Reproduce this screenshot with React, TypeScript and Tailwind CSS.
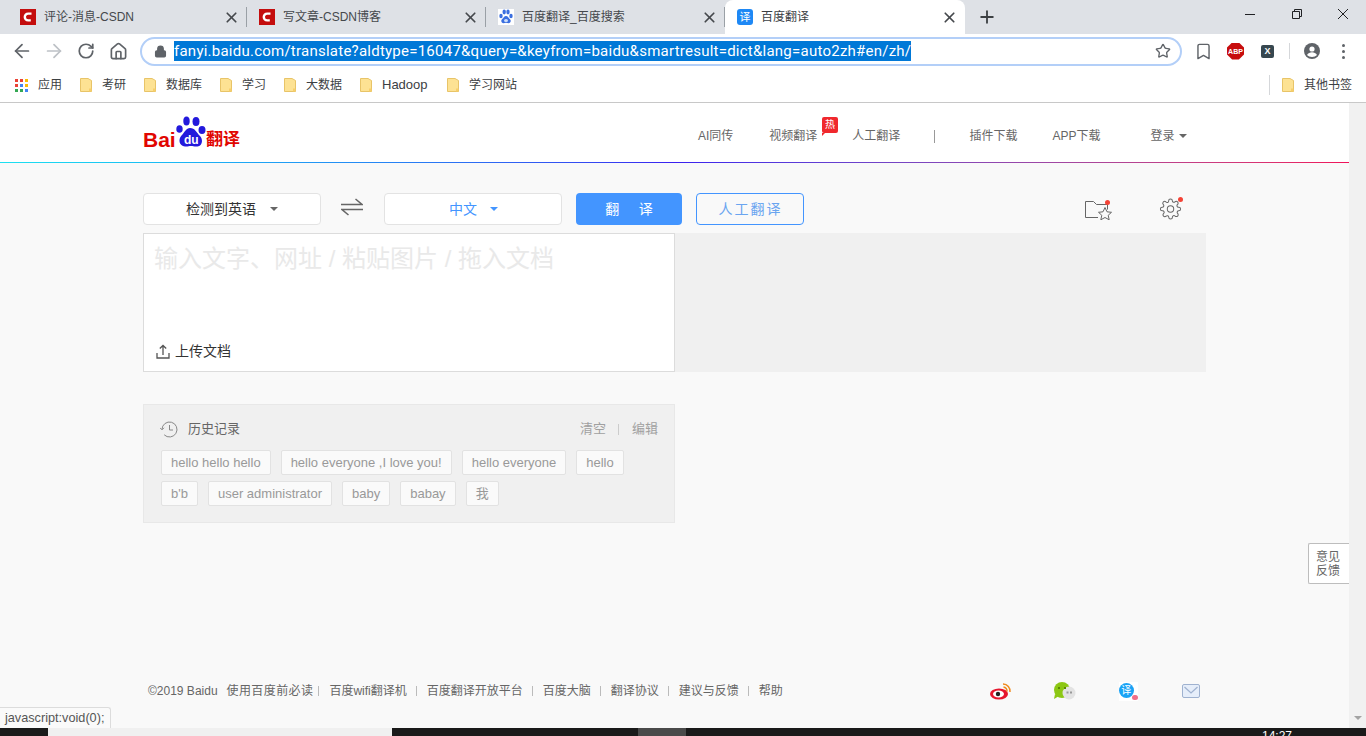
import { ArrowLeft, ArrowRight, RotateCw, House, Lock, Star, Bookmark, Plus, X } from "lucide-react";

const tabs = [
  { title: "评论-消息-CSDN", icon: "csdn" },
  { title: "写文章-CSDN博客", icon: "csdn" },
  { title: "百度翻译_百度搜索", icon: "paw" },
];

const bookmarks = [
  { name: "考研", cls: "w-[64px]", text: "text-[12px]" },
  { name: "数据库", cls: "w-[76px]", text: "text-[12px]" },
  { name: "学习", cls: "w-[64px]", text: "text-[12px]" },
  { name: "大数据", cls: "w-[76px]", text: "text-[12px]" },
  { name: "Hadoop", cls: "w-[87px]", text: "text-[13px]" },
  { name: "学习网站", cls: "w-[90px]", text: "text-[12px]" },
];

const row1 = ["hello hello hello", "hello everyone ,I love you!", "hello everyone", "hello"];
const row2 = ["b'b", "user administrator", "baby", "babay", "我"];

const footerLinks = ["百度wifi翻译机", "百度翻译开放平台", "百度大脑", "翻译协议", "建议与反馈", "帮助"];

function CsdnIcon() {
  return (
    <div className="w-4 h-4 bg-[#c40d0d] flex items-center justify-center shrink-0">
      <svg width="12" height="12" viewBox="0 0 12 12">
        <path d="M9.5 2.6H6.2C4.2 2.6 2.8 4.2 2.8 6s1.4 3.4 3.4 3.4h2.6" fill="none" stroke="#fff" strokeWidth="2.4" />
      </svg>
    </div>
  );
}

function Paw({ size, color }: { size: number; color: string }) {
  return (
    <svg width={size} height={size} viewBox="0 0 16 16" className="shrink-0 bg-white">
      <ellipse cx="3" cy="7" rx="1.700" ry="2.200" fill={color} />
      <ellipse cx="6.200" cy="3" rx="1.700" ry="2.400" fill={color} />
      <ellipse cx="10" cy="3" rx="1.700" ry="2.400" fill={color} />
      <ellipse cx="13" cy="7" rx="1.700" ry="2.200" fill={color} />
      <path d="M8 7c-2 0-2.500 2-4 3.200-1.500 1.500-.5 4 1.500 4 1 0 1.500-.4 2.500-.4s1.500.4 2.500.4c2 0 3-2.500 1.500-4C10.500 9 10 7 8 7z" fill={color} />
      <ellipse cx="8" cy="11.500" rx="2" ry="1.600" fill="#cfe0fa" />
    </svg>
  );
}

function Folder() {
  return (
    <svg width="12" height="14" viewBox="0 0 12 14" className="shrink-0">
      <path d="M.5.5h7.500l3.500 2v11H.5z" fill="#fde293" stroke="#e8c468" />
      <path d="M9 10.500h2.500v3H9z" fill="#f7cf6b" />
    </svg>
  );
}

function Tab({ title, icon }: { title: string; icon: string }) {
  return (
    <div className="w-[239px] h-[34px] flex items-center pl-3 pr-[6px] border-r border-[#9aa0a6] [border-image:linear-gradient(transparent_8px,#9aa0a6_8px,#9aa0a6_26px,transparent_26px)_1]">
      {icon === "csdn" ? <CsdnIcon /> : <Paw size={16} color="#3b6fe0" />}
      <span className="ml-2 text-[12px] text-[#45484c] flex-1">{title}</span>
      <X size={17} strokeWidth={2.400} className="text-[#45484c]" />
    </div>
  );
}

function NavBtn({ children }: { children: React.ReactNode }) {
  return <div className="w-[32px] h-[32px] flex items-center justify-center shrink-0">{children}</div>;
}

function Chrome() {
  return (
    <div className="shrink-0">
      <div className="h-[34px] bg-[#dee1e6] flex items-start pl-[8px] relative">
        {tabs.map((t) => (
          <Tab key={t.title} title={t.title} icon={t.icon} />
        ))}
        <div className="w-[240px] h-[34px] bg-white rounded-t-[8px] flex items-center pl-3 pr-[7px]">
          <div className="w-4 h-4 rounded-[3px] bg-[#1e88f5] text-white text-[11px] leading-4 text-center shrink-0">译</div>
          <span className="ml-2 text-[12px] text-[#3c4043] flex-1">百度翻译</span>
          <X size={17} strokeWidth={2.400} className="text-[#45484c]" />
        </div>
        <Plus size={20} strokeWidth={2.200} className="text-[#3c4043] ml-[12px] mt-[7px]" />
        <div className="ml-auto flex items-start pt-[13px] pr-[17px] gap-[34px] text-[#202124]">
          <div className="w-[10px] h-px bg-[#202124] mt-[1px] mr-[2px]" />
          <svg width="12" height="12" viewBox="0 0 12 12" className="-mt-[5px] ml-0">
            <path d="M1.500 3.500h7v7h-7zM3.500 3.500v-2h7v7h-2" fill="none" stroke="#202124" />
          </svg>
          <svg width="12" height="12" viewBox="0 0 12 12" className="-mt-[5px]">
            <path d="M1 1l10 10M11 1L1 11" stroke="#202124" strokeWidth="1" />
          </svg>
        </div>
      </div>
      <div className="h-[34px] bg-white flex items-center pl-[6px]">
        <NavBtn>
          <ArrowLeft size={22} strokeWidth={1.900} className="text-[#5f6368]" />
        </NavBtn>
        <NavBtn>
          <ArrowRight size={22} strokeWidth={1.900} className="text-[#bdc1c6]" />
        </NavBtn>
        <NavBtn>
          <RotateCw size={18} strokeWidth={2.300} className="text-[#5f6368]" />
        </NavBtn>
        <NavBtn>
          <House size={19} strokeWidth={2.100} className="text-[#5f6368]" />
        </NavBtn>
        <div className="ml-[6px] w-[1042px] h-[29px] rounded-full border-2 border-[#b3cff8] flex items-center pl-[12px] pr-[9px] shrink-0">
          <Lock size={13} strokeWidth={2.500} fill="#5f6368" className="text-[#5f6368] shrink-0" />
          <span className="ml-[7px] bg-[#0078d7] text-white text-[15px] tracking-[0.24px] leading-[20px] font-['Roboto',sans-serif] whitespace-nowrap">
            fanyi.baidu.com/translate?aldtype=16047&query=&keyfrom=baidu&smartresult=dict&lang=auto2zh#en/zh/
          </span>
          <Star size={16} className="ml-auto text-[#5f6368]" />
        </div>
        <Bookmark size={19} strokeWidth={1.800} className="text-[#5f6368] ml-[12px] shrink-0" />
        <div className="ml-[14px] w-[17px] h-[17px] shrink-0 bg-[#c70d0d] [clip-path:polygon(30%_0,70%_0,100%_30%,100%_70%,70%_100%,30%_100%,0_70%,0_30%)] text-white text-[7px] font-bold text-center leading-[17px] font-['Liberation_Sans',sans-serif]">
          ABP
        </div>
        <div className="ml-[17px] w-[13px] h-[13px] shrink-0 rounded-[2px] bg-[#37474f] text-white text-[9px] font-bold text-center leading-[13px] font-['Liberation_Sans',sans-serif]">
          X
        </div>
        <div className="ml-[15px] w-px h-[16px] bg-[#d5d7da] shrink-0" />
        <svg width="18" height="18" viewBox="0 0 18 18" className="ml-[13px] shrink-0">
          <circle cx="9" cy="9" r="8" fill="#5f6368" />
          <circle cx="9" cy="7" r="2.600" fill="#fff" />
          <path d="M4 13c1-2 3-2.800 5-2.800s4 .8 5 2.800c-1.200 1.300-3 2-5 2s-3.800-.7-5-2z" fill="#fff" />
        </svg>
        <div className="ml-[21px] flex flex-col gap-[3px] shrink-0">
          <div className="w-[3px] h-[3px] rounded-full bg-[#5f6368]" />
          <div className="w-[3px] h-[3px] rounded-full bg-[#5f6368]" />
          <div className="w-[3px] h-[3px] rounded-full bg-[#5f6368]" />
        </div>
      </div>
      <div className="h-[35px] bg-white border-b border-[#c8c8c8] flex items-center text-[12px] text-[#3c4043]">
        <div className="ml-[15px] w-[13px] grid grid-cols-3 gap-[2px]">
          {["#ea4335", "#ea4335", "#fbbc05", "#ea4335", "#4285f4", "#fbbc05", "#34a853", "#34a853", "#4285f4"].map((c, i) => (
            <div key={i} className="w-[3px] h-[3px]" style={{ background: c }} />
          ))}
        </div>
        <span className="ml-[10px] w-[42px]">应用</span>
        {bookmarks.map((b) => (
          <div key={b.name} className={`${b.cls} flex items-center gap-[10px] shrink-0`}>
            <Folder />
            <span className={b.text}>{b.name}</span>
          </div>
        ))}
        <div className="ml-auto w-px h-[20px] bg-[#d5d7da]" />
        <div className="ml-[12px] mr-[14px] flex items-center gap-[10px]">
          <Folder />
          <span>其他书签</span>
        </div>
      </div>
    </div>
  );
}

function Logo() {
  return (
    <div className="flex items-end h-[32px] mb-[8px] font-['Liberation_Sans',sans-serif]">
      <span className="text-[#e10601] text-[21px] leading-[20px] font-bold w-[33px] -mb-[2px]">Bai</span>
      <div className="relative w-[30px] h-[32px]">
        <svg width="30" height="32" viewBox="0 0 30 32">
          <ellipse cx="3.500" cy="13" rx="3.200" ry="3.800" fill="#2319dc" />
          <ellipse cx="10.500" cy="5" rx="3.200" ry="4.500" fill="#2319dc" />
          <ellipse cx="20" cy="5.500" rx="3.500" ry="4.500" fill="#2319dc" />
          <ellipse cx="26" cy="14" rx="3.500" ry="4" fill="#2319dc" />
          <path d="M14 12c-4 0-5 4-8.500 7.500C2 23 3 30 9 30.500c3 .2 4-.6 6-.6s3.500 1 6.500.6c5.500-.8 5.500-7.500 2.500-10.500C20.500 16.500 19 12 14 12z" fill="#2319dc" />
        </svg>
        <span className="absolute left-[8px] top-[18px] text-white text-[12px] leading-[12px] font-bold">du</span>
      </div>
      <span className="text-[#e10601] text-[17px] leading-[20px] font-bold font-['Noto_Sans_CJK_SC',sans-serif]">翻译</span>
    </div>
  );
}

function Header() {
  return (
    <div className="h-[60px] shrink-0 bg-white relative flex items-center pl-[143px] pt-[6px] text-[12px] text-[#666]">
      <Logo />
      <span className="ml-[458px]">AI同传</span>
      <span className="ml-[36px]">视频翻译</span>
      <div className="absolute left-[822px] top-[14px] w-[16px] h-[16px] bg-[#f0282d] rounded-[2px] text-white text-[10px] leading-[16px] text-center">
        热
        <div className="absolute left-0 top-full w-0 h-0 border-t-[3px] border-t-[#f0282d] border-r-[3px] border-r-transparent" />
      </div>
      <span className="ml-[35px]">人工翻译</span>
      <div className="ml-[34px] w-px h-[13px] bg-[#999]" />
      <span className="ml-[34px]">插件下载</span>
      <span className="ml-[35px]">APP下载</span>
      <span className="ml-[50px]">登录</span>
      <div className="ml-[5px] w-0 h-0 border-x-[4px] border-x-transparent border-t-[4px] border-t-[#666]" />
      <div className="absolute left-0 right-0 bottom-0 h-px bg-linear-to-r from-[#1ee0f0] via-[#3a1ff0] to-[#f0105a]" />
    </div>
  );
}

function Toolbar() {
  return (
    <div className="flex items-center h-[32px] text-[14px]">
      <div className="w-[178px] h-[32px] bg-white border border-[#e3e3e3] rounded-[4px] flex items-center pl-[42px] text-[#333]">
        <span>检测到英语</span>
        <div className="ml-[14px] w-0 h-0 border-x-[4px] border-x-transparent border-t-[4px] border-t-[#666]" />
      </div>
      <svg width="22" height="18" viewBox="0 0 22 18" className="ml-[20px] mr-[21px] -mt-[5px]">
        <path d="M0 6.500h21L14.500 1M22 11.500H1L7.500 17" fill="none" stroke="#666" strokeWidth="1.500" />
      </svg>
      <div className="w-[178px] h-[32px] bg-white border border-[#e3e3e3] rounded-[4px] flex items-center pl-[64px] text-[#4395ff]">
        <span>中文</span>
        <div className="ml-[13px] w-0 h-0 border-x-[4px] border-x-transparent border-t-[4px] border-t-[#4395ff]" />
      </div>
      <div className="ml-[14px] w-[106px] h-[32px] bg-[#4395ff] rounded-[4px] text-white text-center leading-[32px]">翻&nbsp;&nbsp;&nbsp;&nbsp;&nbsp;译</div>
      <div className="ml-[14px] w-[108px] h-[32px] border border-[#4395ff] rounded-[4px] text-[#6aa5f0] text-center leading-[30px] tracking-[2px] pl-px">人工翻译</div>
      <div className="ml-[281px] relative w-[26px] h-[22px]">
        <svg width="27" height="22" viewBox="0 0 27 22" fill="none" stroke="#666" strokeWidth="1">
          <path d="M13 19.500H.5V3.500h8l3 3h11v5" />
          <path d="M20 9.500l2 4.300 4.500.5-3.300 3 1 4.500-4.200-2.300-4.200 2.300 1-4.500-3.300-3 4.500-.5z" fill="#f9f9f9" />
        </svg>
        <div className="absolute left-[20px] top-[2px] w-[5px] h-[5px] rounded-full bg-[#f44336]" />
      </div>
      <div className="ml-[48px] relative w-[24px] h-[22px]">
        <svg width="23" height="22" viewBox="0 0 24 24" fill="none" stroke="#666" strokeWidth="1.100">
          <circle cx="12" cy="12" r="3.500" />
          <path d="M19.400 15a1.650 1.650 0 0 0 .33 1.820l.06.06a2 2 0 1 1-2.830 2.830l-.06-.06a1.650 1.650 0 0 0-2.800 1.170V21a2 2 0 0 1-4 0v-.09a1.650 1.650 0 0 0-2.820-1.150l-.06.06a2 2 0 1 1-2.830-2.830l.06-.06A1.650 1.650 0 0 0 3.090 14H3a2 2 0 0 1 0-4h.09a1.650 1.650 0 0 0 1.150-2.820l-.06-.06a2 2 0 1 1 2.830-2.830l.06.06A1.650 1.650 0 0 0 10 3.090V3a2 2 0 0 1 4 0v.09a1.650 1.650 0 0 0 2.820 1.150l.06-.06a2 2 0 1 1 2.830 2.830l-.06.06A1.650 1.650 0 0 0 20.910 10H21a2 2 0 0 1 0 4h-.09a1.650 1.650 0 0 0-1.510 1z" />
        </svg>
        <div className="absolute left-[19px] -top-[1px] w-[5px] h-[5px] rounded-full bg-[#f44336]" />
      </div>
    </div>
  );
}

function InputPanel() {
  return (
    <div className="mt-[8px] flex h-[139px]">
      <div className="w-[532px] bg-white border border-[#dcdcdc] relative flex flex-col justify-between pl-[10px] pt-[8px] pb-[9px]">
        <div className="text-[24px] leading-[34px] text-[#e9e9e9]">输入文字、网址 / 粘贴图片 / 拖入文档</div>
        <div className="flex items-center pl-[2px] text-[14px] text-[#333]">
          <svg width="14" height="15" viewBox="0 0 14 15" fill="none" stroke="#555" strokeWidth="1.300">
            <path d="M1 9v5h12V9M7 11V1.500M3.800 4.500L7 1.500l3.200 3" />
          </svg>
          <span className="ml-[5px]">上传文档</span>
        </div>
      </div>
      <div className="w-[531px] bg-[#f0f0f0]" />
    </div>
  );
}

function Chip({ text }: { text: string }) {
  return (
    <div className="h-[25px] px-[9px] bg-[#fafafa] border border-[#e2e2e2] rounded-[2px] text-[13px] leading-[23px] text-[#999] whitespace-nowrap">
      {text}
    </div>
  );
}

function History() {
  return (
    <div className="mt-[32px] w-[532px] h-[119px] bg-[#f0f0f0] border border-[#e8e8e8] pl-[17px] pr-[16px] pt-[15px]">
      <div className="flex items-center h-[18px] text-[13px]">
        <svg width="18" height="17" viewBox="0 0 18 17" fill="none" stroke="#888" strokeWidth="1" className="-ml-px">
          <path d="M2 8.500a7.500 7.500 0 1 1 2.200 5.300M0 6.800l2 2 2-2M9.500 4v5H13" />
        </svg>
        <span className="ml-[10px] text-[#666]">历史记录</span>
        <span className="ml-auto text-[#a0a0a0]">清空</span>
        <div className="ml-[12px] mr-[13px] w-px h-[11px] bg-[#ccc]" />
        <span className="text-[#a0a0a0]">编辑</span>
      </div>
      <div className="mt-[12px] flex gap-[10px]">
        {row1.map((t) => (
          <Chip key={t} text={t} />
        ))}
      </div>
      <div className="mt-[6px] flex gap-[10px]">
        {row2.map((t) => (
          <Chip key={t} text={t} />
        ))}
      </div>
    </div>
  );
}

function Footer() {
  return (
    <div className="mt-auto mb-[27px] flex items-center h-[20px] text-[12px] text-[#666] whitespace-nowrap">
      <span className="ml-[5px] shrink-0">©2019 Baidu</span>
      <span className="ml-[9px] shrink-0 tracking-[0.4px]">使用百度前必读</span>
      {footerLinks.map((l, i) => (
        <div key={l} className="flex items-center shrink-0">
          <div className={`${i === 0 ? "ml-[5px] mr-[10px]" : "ml-[9px] mr-[10px]"} w-px h-[10px] bg-[#bbb]`} />
          <span>{l}</span>
        </div>
      ))}
      <svg width="22" height="18" viewBox="0 0 22 18" className="ml-[207px] shrink-0">
        <ellipse cx="9" cy="12" rx="9" ry="5.500" fill="#e6162d" />
        <ellipse cx="8.500" cy="12" rx="5.500" ry="3.500" fill="#fff" />
        <circle cx="8" cy="12" r="2.200" fill="#222" />
        <path d="M13 2a7 7 0 0 1 7 8M13.500 5a4 4 0 0 1 3.500 4.500" fill="none" stroke="#f08a1d" strokeWidth="1.500" />
      </svg>
      <svg width="24" height="18" viewBox="0 0 24 18" className="ml-[41px] shrink-0">
        <circle cx="9" cy="8" r="8" fill="#8cc714" />
        <path d="M2 12L1 17l5-3z" fill="#8cc714" />
        <circle cx="16" cy="11" r="6.500" fill="#e3e3e3" />
        <rect x="5" y="5" width="2" height="2" fill="#5a8a00" />
        <rect x="11" y="5" width="2" height="2" fill="#5a8a00" />
        <rect x="13.500" y="9.500" width="2" height="2" fill="#999" />
        <rect x="17" y="9.500" width="2" height="2" fill="#999" />
      </svg>
      <div className="ml-[42px] relative w-[19px] h-[19px] bg-white shrink-0">
        <div className="absolute left-0 top-[1px] w-[15px] h-[15px] rounded-full bg-[#1aa3f5] text-white text-[10px] leading-[15px] text-center">译</div>
        <div className="absolute right-0 bottom-[1px] w-[6px] h-[5px] rounded-full bg-[#f0708a]" />
      </div>
      <svg width="18" height="14" viewBox="0 0 18 14" className="ml-[44px] shrink-0">
        <rect x=".5" y=".5" width="17" height="13" rx="1.500" fill="#e6eefa" stroke="#9fb2d0" />
        <path d="M2.500 3L9 9l6.500-6" fill="none" stroke="#9fb2d0" strokeWidth="1.200" />
      </svg>
    </div>
  );
}

export default function App() {
  return (
    <div className="w-[1366px] h-[736px] overflow-hidden flex flex-col relative font-['Liberation_Sans','Noto_Sans_CJK_SC',sans-serif]">
      <Chrome />
      <div className="flex-1 min-h-0 flex">
        <div className="flex-1 min-w-0 bg-[#f9f9f9] flex flex-col relative">
          <Header />
          <div className="flex-1 min-h-0 flex flex-col pl-[143px] pr-[143px] pt-[30px] w-[1349px]">
            <Toolbar />
            <InputPanel />
            <History />
            <Footer />
          </div>
          <div className="absolute right-0 top-[440px] w-[41px] h-[41px] bg-white border border-r-0 border-[#bdbdbd] rounded-l-[2px] text-[12px] leading-[14px] text-[#666] pl-[7px] pt-[6px]">
            意见
            <br />
            反馈
          </div>
        </div>
        <div className="w-[17px] bg-[#f1f1f1] flex flex-col justify-end items-center pb-[8px]">
          <div className="w-0 h-0 border-x-[4px] border-x-transparent border-t-[4px] border-t-[#a3a3a3]" />
        </div>
      </div>
      <div className="h-[8px] shrink-0 bg-[#1a1a1a] flex text-white text-[12px]">
        <div className="ml-[48px] w-[344px] bg-[#f0f0f0]" />
        <div className="ml-[246px] w-[48px] bg-[#4a4a4a]" />
        <span className="ml-[576px] leading-[16px]">14:27</span>
      </div>
      <div className="absolute left-0 bottom-[8px] h-[21px] w-[111px] bg-[#fafafa] border border-l-0 border-b-0 border-[#dcdcdc] rounded-tr-[3px] pl-[5px] text-[12.7px] leading-[20px] text-[#555] whitespace-nowrap">
        javascript:void(0);
      </div>
    </div>
  );
}
